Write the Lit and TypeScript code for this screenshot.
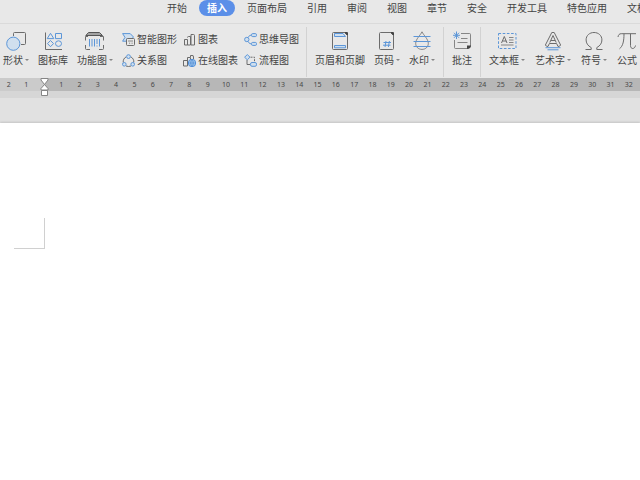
import { LitElement, html, svg, css, nothing, type TemplateResult, type SVGTemplateResult } from "lit";
import { customElement, property } from "lit/decorators.js";

const icons: Record<string, SVGTemplateResult> = {
  shapes: svg`<path class="k" d="M7.5 5V2.5Q7.5 1.5 8.5 1.5H18.5Q19.5 1.5 19.5 2.5V12.5Q19.5 13.5 18.5 13.5H15"/><circle class="b tint" cx="7.3" cy="12.7" r="6.6"/>`,
  library: svg`<path class="k" d="M2.5 1.5V18.5H19"/><path class="b" d="M7.5 2.3L10.8 7.6H4.2ZM12.5 2.5H18.5V7.6H12.5ZM7.5 9.5L10.5 12.6L7.5 15.7L4.5 12.6Z"/><ellipse class="b" cx="15.5" cy="12.6" rx="3" ry="2.8"/>`,
  feature: svg`<path d="M3.5 1.5H14.5L17.5 4.5H.8Z" fill="#a3a3a3" stroke="#555"/><path class="k" d="M.5 9.5V5.5H3M15 5.5H18.5V9.5M.5 14V17.5Q.5 18.5 1.5 18.5H5M14 18.5H17.5Q18.5 18.5 18.5 17.5V14"/><path class="b" d="M4.5 8V15.5M7 8V15.5M9.5 8V15.5M12 8V13M12 14.5V15.5M14.5 8V15.5"/>`,
  header: svg`<path class="k" d="M3.5 1.5H14.5L17.5 4.5V17.5Q17.5 18.5 16.5 18.5H3.5Q2.5 18.5 2.5 17.5V2.5Q2.5 1.5 3.5 1.5Z"/><path d="M14 1L18 5V1.8Q18 1 17 1Z" fill="#444"/><path class="b tint" d="M4.5 2.5H13L15.5 5.5H4.5ZM4.5 14.5H15.5V16.8H4.5Z"/>`,
  pageno: svg`<path class="k" d="M3.5 1.5H13.5L16.5 4.5V17.5Q16.5 18.5 15.5 18.5H3.5Q2.5 18.5 2.5 17.5V2.5Q2.5 1.5 3.5 1.5Z"/><path d="M13 1L17 5V1.8Q17 1 16 1Z" fill="#444"/><path class="b" d="M9 10L8 16M12.4 10L11.4 16M6.5 11.5H14M6 14.2H13.5"/>`,
  watermark: svg`<path class="k thin" d="M10 .8C8.4 4.3 3.7 8 3.7 12.4C3.7 16 6.5 18.4 10 18.4S16.3 16 16.3 12.4C16.3 8 11.6 4.3 10 .8Z"/><path class="b" d="M1.5 5.5H18.5M1.5 10.5H18.5M1.5 15.5H18.5"/>`,
  comment: svg`<path class="k thin" d="M9 2.5H17.5Q18.5 2.5 18.5 3.5V15L15.5 17.5H3.5Q2.5 17.5 2.5 16.5V9"/><path d="M15 18V14.6H19Q19 18 15 18Z" fill="#444"/><path class="k thin" d="M9 7.5H15.5M5.5 11.5H15.5"/><path class="b" d="M4.5 .5V8M1 4.3H8M2 1.8L7 6.8M7 1.8L2 6.8"/>`,
  textbox: svg`<path class="b" stroke-dasharray="2.6 1.6" d="M1.5 2.5H19V17.5H1.5Z"/><path class="k" d="M4.5 12L7.3 5.5L10 12M5.5 10H9.2"/><path class="k thin" d="M12 6.5H16.5M12 9H16.5M12 11.5H16.5M4 14H16.5"/>`,
  wordart: svg`<path class="k" d="M8.8 1.5H11.2L17.6 14Q17 15.5 15 15.5L13.6 12.5H6.4L5 15.5Q3 15.5 2.4 14Z"/><path class="k" d="M6.8 11.5L10 4.5L13.2 11.5M8 9.5H12"/><path class="b" d="M2.5 16.7H17.5M4.5 18.8H15.5"/>`,
  omega: svg`<path class="k" d="M1.5 18.5H7.2V16.6C3.6 14.6 2.1 12 2.1 8.9C2.1 4.5 5.5 1.5 10 1.5S17.9 4.5 17.9 8.9C17.9 12 16.4 14.6 12.8 16.6V18.5H18.5"/>`,
  pi: svg`<path class="k" d="M1 6C1.4 3.7 2.4 2.7 4.2 2.7H19M7 2.8C7 10 6 15 2.5 17.8M13.5 2.8V14.5C13.5 18.6 17.8 18.4 18.5 14.5"/>`,
  smart: svg`<path class="b tint" d="M.6 .6H8.2L11.5 4L9.5 6H4.5V8.2H.6L3 4.4Z"/><rect class="k" x="4.5" y="5.5" width="8" height="7" rx="1" fill="#e8e8e8"/><path class="k thin" d="M6 8H11M7 10.2H8.2M9.5 10.2H10.7"/>`,
  relation: svg`<path class="k" d="M4.2 2.8C2 4 1 6 1.2 8.5M8.8 2.8C11 4 12 6 11.8 8.5M4 12Q6.5 13 9 12"/><circle class="b tint" cx="6.5" cy="2.6" r="1.9"/><circle class="b tint" cx="2.3" cy="10.3" r="1.8"/><circle class="b tint" cx="10.7" cy="10.3" r="1.8"/>`,
  chart: svg`<path class="k" d="M1.5 6.5H4.5V12H1.5ZM4.5 4.5Q4.5 3.5 5.5 3.5H7.5V12H4.5M8 1.5H10.5Q11.5 1.5 11.5 2.5V12H8Z"/>`,
  online: svg`<path class="k" d="M4.5 12H.5V6.5H4.5M4.5 12V3.5H7.5V6M7.5 3V1.5H9Q10.5 1 10.5 3V5"/><circle cx="9" cy="9" r="3.7" fill="#a9cbef" stroke="#4a8bd8"/><path class="b thin" d="M5.5 9H12.5M9 5.5V12.5M9 5.5Q5.8 9 9 12.5Q12.2 9 9 5.5"/>`,
  mind: svg`<path class="b" d="M4.2 4.5Q5 2 7.5 2M4.2 8.5Q5 11 7.5 11"/><circle class="b tint" cx="2.8" cy="6.5" r="2.2"/><rect class="b tint" x="7.5" y=".6" width="5" height="3" rx="1.2"/><rect class="b tint" x="7.5" y="9.4" width="5" height="3" rx="1.2"/>`,
  flow: svg`<path class="b tint" d="M3.3 .6L6 3.2L3.3 5.8L.6 3.2Z"/><path class="k" stroke-dasharray="2 1" d="M6.5 3.2H10.5V8"/><path class="k" d="M3 6V10.5H6"/><rect class="b tint" x="6.5" y="8.5" width="6" height="3.8" rx="1.5"/>`,
};

@customElement("ribbon-button")
export class RibbonButton extends LitElement {
  @property() label = "";
  @property() icon = "";
  @property({ type: Boolean }) menu = false;
  @property({ type: Boolean, reflect: true }) small = false;

  static styles = css`
    :host { display: block; flex: none; }
    .btn {
      display: grid; justify-items: center; row-gap: 1px;
      border: 0; padding: 0; background: none; color: #444;
      font: 10px/16px "Noto Sans CJK SC", sans-serif; white-space: nowrap;
    }
    .btn.small { grid-auto-flow: column; align-items: center; column-gap: 2px; }
    .text { display: flex; align-items: center; gap: 2px; }
    .caret { border: 2px solid transparent; border-top: 2px solid #858585; border-bottom: 0; }
    svg { display: block; fill: none; }
    .k { stroke: #6c6c6c; }
    .b { stroke: #5c96d8; }
    .thin { stroke-width: 0.8; }
    .tint { fill: #d0dfee; }
  `;

  render() {
    const s = this.small ? 13 : 20;
    return html`<button class="btn ${this.small ? "small" : ""}" type="button">
      <svg width=${s} height=${s} viewBox="0 0 ${s} ${s}" aria-hidden="true">${icons[this.icon]}</svg>
      <span class="text">${this.label}${this.menu ? html`<i class="caret"></i>` : nothing}</span>
    </button>`;
  }
}

const big = (icon: string, label: string, menu = false): TemplateResult =>
  html`<ribbon-button .icon=${icon} .label=${label} .menu=${menu}></ribbon-button>`;
const small = (icon: string, label: string): TemplateResult =>
  html`<ribbon-button small .icon=${icon} .label=${label}></ribbon-button>`;

@customElement("app-root")
export class AppRoot extends LitElement {
  static styles = css`
    :host {
      display: flex; flex-direction: column; min-height: 100vh; overflow: hidden;
      background: #e1e1e1; color: #444;
      font: 10px/16px "Noto Sans CJK SC", sans-serif;
    }
    .tabs {
      display: flex; gap: 4px; padding: 0 0 7px 159px;
      background: #e8e8e8; border-bottom: 1px solid #dadada; overflow: hidden;
    }
    .tab {
      flex: none; border: 0; padding: 0 8px; border-radius: 8px;
      background: none; color: inherit; font: inherit; white-space: nowrap;
    }
    .tab.active { background: #5b8fe8; color: #fff; font-weight: 700; }
    .ribbon { display: flex; background: #e8e8e8; padding: 3px 0 1px; overflow: hidden; }
    .group {
      display: flex; flex: none; gap: 9px; height: 46px; padding: 4px 8px 0;
      border-right: 1px solid #d2d2d2;
    }
    .group.first { padding: 4px 7px 0 3px; }
    .group.last { gap: 10px; border: 0; }
    .pairs { display: flex; gap: 6px; }
    .pair { display: grid; align-content: start; gap: 5px; }
    .ruler {
      position: relative; display: flex; height: 13px; background: #b7b7b7;
      color: #484848; font: 7px/13px "Noto Sans", sans-serif; text-align: center;
    }
    .margin { display: flex; flex: none; box-sizing: border-box; width: 44px; padding-right: 9px; background: #cbcbcb; }
    .scale { display: flex; flex: 1; padding: 0 2px 0 8px; }
    .tick { flex: 1; }
    .indent { position: absolute; left: 40px; top: 0; fill: #fff; stroke: #858585; }
    .strip { height: 7px; background: #d6d6d6; }
    .page {
      flex: 1; margin-top: 25px; padding: 95px 14px; background: #fff;
      box-shadow: 0 -1px 2px #c4c4c4;
    }
    .corner { width: 30px; height: 30px; border: solid #d0d0d0; border-width: 0 1px 1px 0; }
  `;

  private tabs = ["开始", "插入", "页面布局", "引用", "审阅", "视图", "章节", "安全", "开发工具", "特色应用", "文档"];

  render() {
    return html`
      <nav class="tabs">
        ${this.tabs.map((t) => html`<button type="button" class="tab ${t === "插入" ? "active" : ""}">${t}</button>`)}
      </nav>
      <div class="ribbon">
        <div class="group first">
          ${big("shapes", "形状", true)}${big("library", "图标库")}${big("feature", "功能图", true)}
          <div class="pairs">
            <div class="pair">${small("smart", "智能图形")}${small("relation", "关系图")}</div>
            <div class="pair">${small("chart", "图表")}${small("online", "在线图表")}</div>
            <div class="pair">${small("mind", "思维导图")}${small("flow", "流程图")}</div>
          </div>
        </div>
        <div class="group">
          ${big("header", "页眉和页脚")}${big("pageno", "页码", true)}${big("watermark", "水印", true)}
        </div>
        <div class="group">${big("comment", "批注")}</div>
        <div class="group last">
          ${big("textbox", "文本框", true)}${big("wordart", "艺术字", true)}${big("omega", "符号", true)}${big("pi", "公式")}
        </div>
      </div>
      <div class="ruler">
        <div class="margin"><span class="tick">2</span><span class="tick">1</span></div>
        <div class="scale">
          ${Array.from({ length: 32 }, (_, i) => html`<span class="tick">${i + 1}</span>`)}
        </div>
        <svg class="indent" width="9" height="18" viewBox="0 0 9 18" aria-hidden="true">
          <path d="M1 .5H8V2L4.5 6.5L1 2ZM4.5 6.5L8 10.5V12H1V10.5ZM1.5 12.5H7.5V17.5H1.5Z" />
        </svg>
      </div>
      <div class="strip"></div>
      <main class="page"><div class="corner"></div></main>
    `;
  }
}
